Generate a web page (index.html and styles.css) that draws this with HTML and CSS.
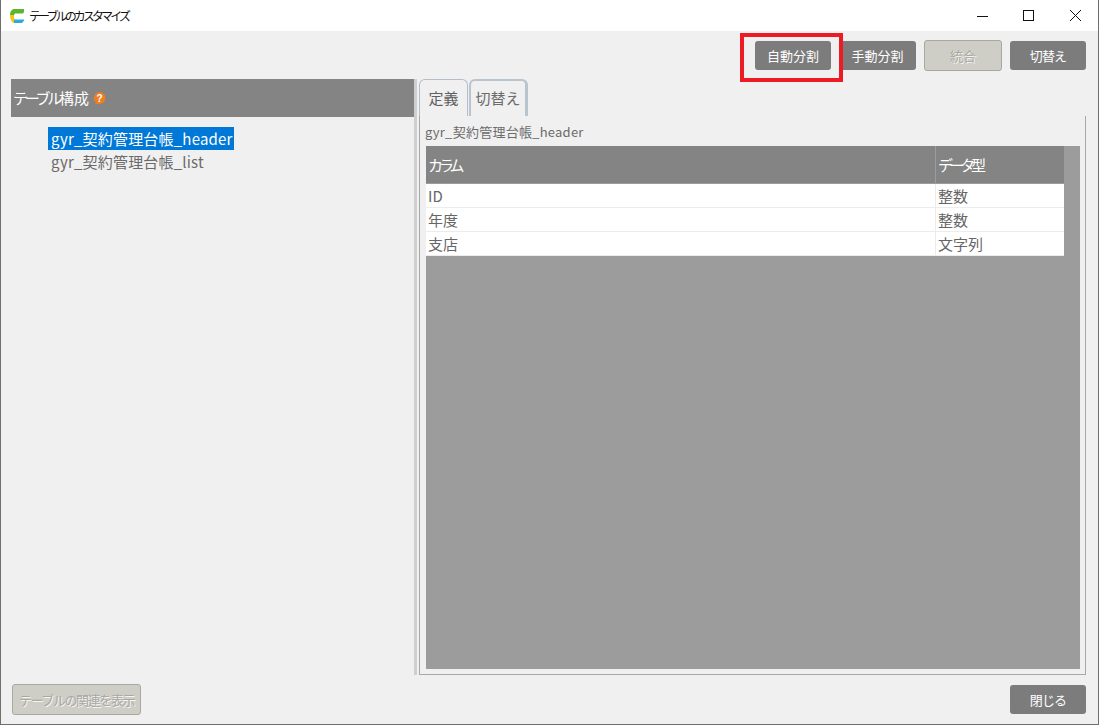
FILE: index.html
```html
<!DOCTYPE html>
<html lang="ja">
<head>
<meta charset="utf-8">
<title>テーブルのカスタマイズ</title>
<link rel="stylesheet" href="styles.css">
</head>
<body>
<div class="window">
  <header class="titlebar">
    <div class="title-left">
      <svg class="logo" width="16" height="16" viewBox="0 0 16 16">
        <path d="M4.500 1H15V4L14 5.500H6L5 7H1C1 4 2.500 1.500 4.500 1Z" fill="#5cb531"/>
        <path d="M1 7H5V10L6.500 11.500H5V15C2.500 14.500 1 11 1 7Z" fill="#f5c518"/>
        <path d="M5 11.500H15V12.500L13 15H5Z" fill="#29abe2"/>
      </svg>
      <span class="title-text">テーブルのカスタマイズ</span>
    </div>
    <div class="win-controls">
      <svg class="win-btn" width="46" height="31" viewBox="0 0 46 31"><path d="M18 16.500H29" stroke="#111" fill="none"/></svg>
      <svg class="win-btn" width="46" height="31" viewBox="0 0 46 31"><rect x="18.500" y="10.500" width="10" height="10" stroke="#111" fill="none"/></svg>
      <svg class="win-btn" width="46" height="31" viewBox="0 0 46 31"><path d="M19 10L30 21M30 10L19 21" stroke="#111" fill="none"/></svg>
    </div>
  </header>
  <div class="toolbar">
    <button class="btn w76">自動分割</button>
    <button class="btn w77">手動分割</button>
    <button class="btn w78 disabled">統合</button>
    <button class="btn w76 tight">切替え</button>
    <div class="highlight"></div>
  </div>
  <main class="main">
    <section class="left">
      <div class="left-head"><span class="kana">テーブル</span>構成<svg class="help" width="15" height="15" viewBox="0 0 15 15"><path d="M7.500 1A6 6 0 0 1 7.500 13H3L4 11.500A6 6 0 0 1 7.500 1Z" fill="#f07d1e"/><text x="7.500" y="10.500" text-anchor="middle" class="help-q">?</text></svg></div>
      <ul class="tree">
        <li><span class="node selected">gyr_契約管理台帳_header</span></li>
        <li><span class="node">gyr_契約管理台帳_list</span></li>
      </ul>
    </section>
    <div class="splitter"></div>
    <section class="right">
      <div class="tabs">
        <div class="tab active">定義</div>
        <div class="tab">切替え</div>
      </div>
      <div class="tab-panel">
        <div class="panel-label">gyr_契約管理台帳_header</div>
        <div class="grid-area">
          <table class="grid">
            <thead><tr><th class="col1"><span class="kana-tight">カラム</span></th><th class="col2"><span class="kana-tight">データ</span>型</th></tr></thead>
            <tbody>
              <tr><td>ID</td><td>整数</td></tr>
              <tr><td>年度</td><td>整数</td></tr>
              <tr><td>支店</td><td>文字列</td></tr>
            </tbody>
          </table>
        </div>
      </div>
    </section>
  </main>
  <footer class="footer">
    <button class="btn wide disabled">テーブルの関連を表示</button>
    <button class="btn w76 tight">閉じる</button>
  </footer>
</div>
</body>
</html>
```
FILE: styles.css
```css
* { box-sizing: border-box; }
html, body { margin: 0; padding: 0; }
body {
  width: 1099px;
  height: 725px;
  overflow: hidden;
  font-family: "Noto Sans CJK JP", "Noto Sans", sans-serif;
  color: #666;
}
.window {
  width: 1099px;
  height: 725px;
  display: flex;
  flex-direction: column;
  background: #f0f0f0;
  border-left: 1px solid #6e6e6e;
  border-right: 1px solid #6e6e6e;
  border-bottom: 1px solid #6e6e6e;
}
.titlebar {
  height: 31px;
  flex: none;
  background: #fff;
  display: flex;
  justify-content: space-between;
  align-items: center;
}
.title-left { display: flex; align-items: center; padding-left: 8px; gap: 4px; }
.logo { display: block; }
.title-text { font-size: 12px; color: #111; letter-spacing: -2.9px; }
.win-controls { display: flex; margin-right: 1px; }
.win-btn { display: block; }
.toolbar {
  position: relative;
  height: 48px;
  flex: none;
  display: flex;
  justify-content: flex-end;
  align-items: center;
  gap: 8px;
  padding: 0 12px 0 0;
}
.btn {
  height: 29px;
  border: 0;
  border-radius: 3px;
  background: #7c7c7c;
  color: #fff;
  font-family: inherit;
  font-size: 13px;
  padding: 0;
  white-space: nowrap;
  flex: none;
}
.tight { letter-spacing: -0.8px; }
.w76 { width: 76px; }
.w77 { width: 77px; }
.w78 { width: 78px; }
.wide { width: 129px; letter-spacing: -1.4px; }
.disabled {
  height: 31px;
  background: #cfcec6;
  border: 1px solid #a8a8a2;
  color: #a9a9a4;
  text-shadow: 1px 1px 0 #f4f4f4;
}
.highlight {
  position: absolute;
  left: 739px;
  top: 2px;
  width: 103px;
  height: 49px;
  border: 4px solid #ed1c24;
}
.main {
  flex: 1;
  min-height: 0;
  display: flex;
  padding-left: 10px;
  padding-right: 12px;
}
.left { width: 403px; flex: none; }
.left-head {
  height: 38px;
  background: #848484;
  color: #fff;
  font-size: 15px;
  display: flex;
  align-items: center;
  padding: 0 0 2px 2px;
}
.kana { letter-spacing: -3.3px; }
.kana-tight { letter-spacing: -4px; }
.help { display: block; margin-left: 3px; margin-top: 2px; }
.help-q { font-size: 10px; font-weight: 700; fill: #fff; font-family: "Liberation Sans", sans-serif; }
.tree { list-style: none; margin: 10px 0 0; padding: 0 0 0 37px; font-size: 15px; }
.tree li { height: 23px; line-height: 23px; }
.node { display: inline-block; height: 23px; padding: 0 1px 0 3px; color: #6b6b6b; letter-spacing: 0.2px; }
.node.selected { background: #0078d7; color: #fff; }
.splitter { width: 3px; flex: none; background: #cfcfcf; }
.right { flex: 1; min-width: 0; display: flex; flex-direction: column; padding-left: 2px; }
.tabs { display: flex; height: 37px; flex: none; gap: 1px; }
.tab {
  height: 37px;
  font-size: 15px;
  display: flex;
  align-items: center;
  justify-content: center;
  padding-bottom: 2px;
  border: 1px solid #b4bec8;
  border-bottom: 0;
  border-radius: 6px 6px 0 0;
}
.tab.active { width: 49px; background: #f0f0f0; color: #5f5f5f; }
.tab:not(.active) { width: 59px; background: #f0f0f0; border: 3px solid #b8c4ce; border-bottom: 0; border-top-width: 2px; border-left-width: 2px; color: #6b6b6b; }
.tab-panel {
  flex: 1;
  min-height: 0;
  display: flex;
  flex-direction: column;
  border: 1px solid #a8a8a8;
  border-top: 0;
  padding: 7px 5px 5px 6px;
}
.panel-label { height: 23px; font-size: 13px; line-height: 18px; margin-left: -1px; color: #6b6b6b; letter-spacing: 0.25px; }
.grid-area { flex: 1; min-height: 0; background: #9c9c9c; }
.grid {
  width: 638px;
  border-collapse: separate;
  border-spacing: 0;
  table-layout: fixed;
  font-size: 15px;
}
.grid th {
  height: 38px;
  background: #848484;
  color: #fff;
  font-weight: 400;
  text-align: left;
  padding: 0 2px;
  border-bottom: 1px solid #9c9c9c;
}
.col1 { width: 510px; border-right: 1px solid #9c9c9c; }
.grid td {
  height: 24px;
  background: #fff;
  color: #666;
  padding: 0 2px;
  border-bottom: 1px solid #ececec;
  line-height: 23px;
}
.grid td:first-child { border-right: 1px solid #ececec; }
.footer {
  height: 49px;
  flex: none;
  display: flex;
  justify-content: space-between;
  align-items: center;
  padding: 0 12px 0 11px;
}
```
